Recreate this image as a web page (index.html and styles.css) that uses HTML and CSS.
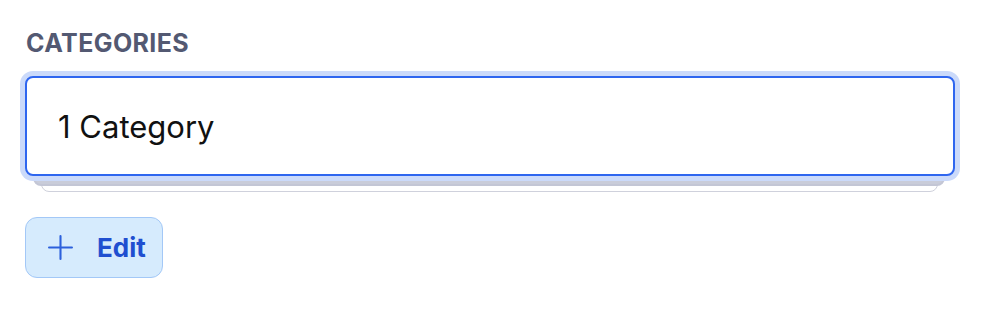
FILE: index.html
```html
<!DOCTYPE html>
<html lang="en">
<head>
  <meta charset="UTF-8">
  <meta name="viewport" content="width=device-width, initial-scale=1.0">
  <title>Categories</title>
  <link rel="stylesheet" href="styles.css">
</head>
<body>
  <div class="field">
    <div class="field-label">Categories</div>

    <div class="stack">
      <div class="stack-card">1 Category</div>
    </div>

    <button type="button" class="edit-btn">
      <svg class="edit-icon" viewBox="0 0 24 24" width="25" height="25" aria-hidden="true">
        <path d="M12 1v22M1 12h22" fill="none" stroke="currentColor" stroke-width="2" stroke-linecap="round"/>
      </svg>
      <span>Edit</span>
    </button>
  </div>
</body>
</html>
```

FILE: styles.css
```css
html, body {
  margin: 0;
  padding: 0;
  background: #fff;
}

body {
  font-family: Inter, "Noto Sans", sans-serif;
  color: #111;
}

.field {
  padding: 28px 29px 0 25px;
}

.field-label {
  font-size: 25px;
  font-weight: 700;
  line-height: 30px;
  letter-spacing: 0.4px;
  text-transform: uppercase;
  color: #535972;
  margin-left: 1px;
}

.stack {
  position: relative;
  margin-top: 18px;
  height: 115px;
}

/* stacked cards peeking out under the main one */
.stack::before,
.stack::after {
  content: "";
  position: absolute;
  border-radius: 8px;
  background: #fff;
}

.stack::before {
  left: 8px;
  right: 10px;
  top: 20px;
  height: 86px;
  border: 2px solid #c3c6d5;
  background: #c9ccd9;
  z-index: 1;
}

.stack::after {
  left: 16px;
  right: 17px;
  top: 30px;
  height: 84px;
  border: 1.5px solid #cfd1dc;
  z-index: 0;
}

.stack-card {
  position: relative;
  z-index: 2;
  box-sizing: border-box;
  height: 100px;
  padding: 0 31px;
  display: flex;
  align-items: center;
  font-size: 31px;
  background: #fff;
  border: 2px solid #2f66ef;
  border-radius: 8px;
  box-shadow: 0 0 0 5px #cbdafa;
}

.edit-btn {
  margin-top: 26px;
  display: flex;
  align-items: center;
  gap: 24px;
  height: 61px;
  padding: 0 16px 0 22px;
  background: #d6ebfd;
  border: 1.5px solid #a3c8f7;
  border-radius: 12px;
  font-family: inherit;
  font-size: 26px;
  font-weight: 700;
  color: #1f4fd0;
  cursor: pointer;
}

.edit-icon {
  color: #2c60dc;
}
```
